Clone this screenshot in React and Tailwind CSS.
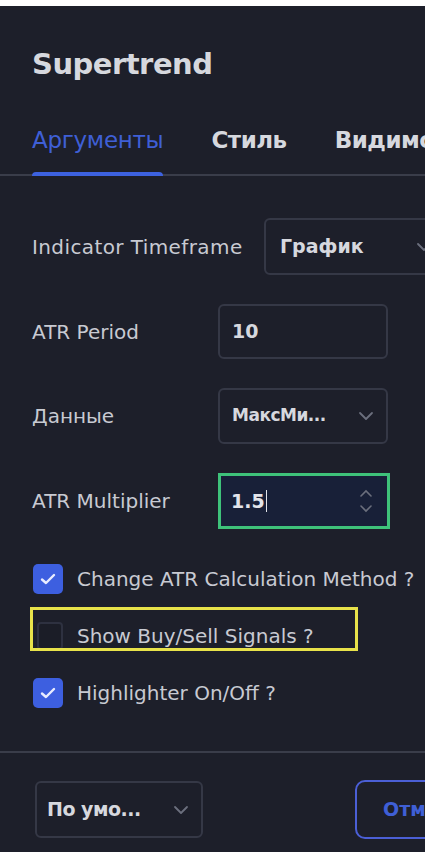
import React from "react";

const font = { fontFamily: '"DejaVu Sans", "Noto Sans", sans-serif' };

function Chevron({ className = "" }) {
  return (
    <svg className={className} width="16" height="10" viewBox="0 0 16 10" fill="none">
      <path d="M2 2l6 6 6-6" stroke="#6b6f7d" strokeWidth="1.8" strokeLinecap="round" strokeLinejoin="round" />
    </svg>
  );
}

function Check({ checked }) {
  if (!checked)
    return <div className="w-[26px] h-[28px] rounded-[4px] border-2 border-[#2e3140] bg-[#1b1d27] shrink-0 ml-[4px]" />;
  return (
    <div className="w-[30px] h-[30px] rounded-[5px] bg-[#3d5fe0] flex items-center justify-center shrink-0">
      <svg width="16" height="12" viewBox="0 0 16 12" fill="none">
        <path d="M2 6.5l4 3.5 8-8" stroke="#e8ecff" strokeWidth="2.4" strokeLinecap="round" strokeLinejoin="round" />
      </svg>
    </div>
  );
}

export default function App() {
  return (
    <div className="w-[427px] h-[852px] bg-white overflow-hidden" style={font}>
      <div className="mt-[6px] mr-[2px] h-[846px] bg-[#1d1f2a] text-[#c8cad2] relative overflow-hidden">
        <div className="pl-[32px] pt-[40px] text-[29px] leading-[36px] font-bold text-[#d6d8de] tracking-[-0.5px]">Supertrend</div>

        <div className="mt-[44px] flex gap-[48px] pl-[32px] border-b-2 border-[#3a3d4a] text-[23px] leading-[28px] whitespace-nowrap">
          <div className="flex flex-col">
            <span className="text-[#3f5fd6] tracking-[-0.3px]">Аргументы</span>
            <div className="mt-[18px] h-[4px] bg-[#3d62e0] rounded-t-sm -mb-[2px]" />
          </div>
          <span className="font-bold text-[#d6d8de] tracking-[-0.5px]">Стиль</span>
          <span className="font-bold text-[#d6d8de] tracking-[-0.5px]">Видимость</span>
        </div>

        <div className="pt-[42px] flex flex-col gap-[29px] text-[20px]">
          <div className="flex items-center pl-[32px] h-[57px]">
            <span className="w-[232px] shrink-0 whitespace-nowrap tracking-[0.4px]">Indicator Timeframe</span>
            <div className="h-[57px] w-[180px] shrink-0 border-2 border-[#353846] rounded-[6px] flex items-center pl-[14px] pr-[10px] justify-between">
              <span className="font-bold text-[#d6d8de] text-[19px]">График</span>
              <Chevron />
            </div>
          </div>
          <div className="flex items-center pl-[32px] h-[55px]">
            <span className="w-[186px] shrink-0">ATR Period</span>
            <div className="h-[55px] w-[170px] border-2 border-[#353846] rounded-[6px] flex items-center pl-[12px]">
              <span className="font-bold text-[#d6d8de] text-[19px]">10</span>
            </div>
          </div>
          <div className="flex items-center pl-[32px] h-[56px]">
            <span className="w-[186px] shrink-0">Данные</span>
            <div className="h-[56px] w-[170px] border-2 border-[#353846] rounded-[6px] flex items-center pl-[12px] pr-[12px] justify-between">
              <span className="font-bold text-[#d6d8de] text-[17px] tracking-[-0.5px]">МаксМи...</span>
              <Chevron />
            </div>
          </div>
          <div className="flex items-center pl-[32px] h-[56px]">
            <span className="w-[186px] shrink-0">ATR Multiplier</span>
            <div className="h-[56px] w-[172px] border-[3px] border-[#3ec27a] bg-[#182038] flex items-center pl-[10px] pr-[14px] justify-between">
              <span className="font-bold text-[#e2e4ea] text-[19px] flex items-center">
                1.5<span className="inline-block w-[1.5px] h-[22px] bg-[#e2e4ea] ml-[1px]" />
              </span>
              <div className="flex flex-col gap-[8px]">
                <svg width="14" height="8" viewBox="0 0 14 8" fill="none"><path d="M2 7l5-5 5 5" stroke="#6b6f7d" strokeWidth="1.6" strokeLinecap="round" /></svg>
                <svg width="14" height="8" viewBox="0 0 14 8" fill="none"><path d="M2 1l5 5 5-5" stroke="#6b6f7d" strokeWidth="1.6" strokeLinecap="round" /></svg>
              </div>
            </div>
          </div>
        </div>

        <div className="mt-[35px] flex flex-col gap-[27px] pl-[33px] text-[20px] whitespace-nowrap">
          <div className="flex items-center gap-[14px] h-[30px]">
            <Check checked />
            <span>Change ATR Calculation Method ?</span>
          </div>
          <div className="flex items-center gap-[14px] h-[30px] relative">
            <Check checked={false} />
            <span>Show Buy/Sell Signals ?</span>
            <div className="absolute left-[-3px] top-[-14px] w-[328px] h-[44px] border-[3px] border-[#e8e24a]" />
          </div>
          <div className="flex items-center gap-[14px] h-[30px]">
            <Check checked />
            <span>Highlighter On/Off ?</span>
          </div>
        </div>

        <div className="mt-[43px] border-t-2 border-[#3a3d4a]" />

        <div className="mt-[27px] flex items-center justify-between pl-[35px] text-[19px]">
          <div className="h-[57px] w-[168px] border-2 border-[#353846] rounded-[6px] flex items-center pl-[10px] pr-[12px] justify-between">
            <span className="font-bold text-[#d6d8de] whitespace-nowrap tracking-[-0.5px]">По умо...</span>
            <Chevron />
          </div>
          <div className="h-[59px] w-[100px] -mr-[30px] border-2 border-[#4b5fd6] rounded-[10px] flex items-center pl-[26px]">
            <span className="font-bold text-[#3f5fd6] whitespace-nowrap">Отмена</span>
          </div>
        </div>
      </div>
    </div>
  );
}
